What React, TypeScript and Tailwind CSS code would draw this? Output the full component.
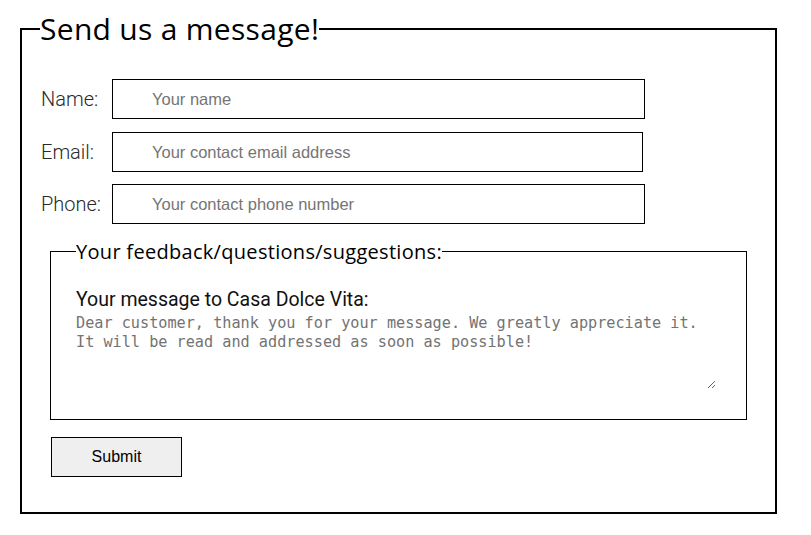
export default function App() {
  const rows = [
    { label: "Name:", placeholder: "Your name", w: "w-[533px]", mt: "mt-[32px]" },
    { label: "Email:", placeholder: "Your contact email address", w: "w-[531px]", mt: "mt-[13px]" },
    { label: "Phone:", placeholder: "Your contact phone number", w: "w-[533px]", mt: "mt-[12px]" },
  ];

  return (
    <div className="min-h-screen bg-white pl-[20px] pt-[11px]">
      <fieldset className="w-[757px] border-2 border-black pl-[18px] pb-[35px]">
        <legend className="font-['Open_Sans',sans-serif] text-[30px] leading-[36px] tracking-[0.3px] text-black">
          Send us a message!
        </legend>

        {rows.map((r) => (
          <div key={r.label} className={`flex items-center ${r.mt}`}>
            <label className="w-[72px] pl-[1px] font-['Roboto',sans-serif] text-[20px] font-light text-[#2a2a2a]">
              {r.label}
            </label>
            <input
              type="text"
              placeholder={r.placeholder}
              className={`${r.w} h-[40px] border border-black pl-[39px] font-['Liberation_Sans',sans-serif] text-[16.5px] outline-none placeholder:text-[#757575]`}
            />
          </div>
        ))}

        {/* Feedback box */}
        <fieldset className="mt-[16px] ml-[10px] w-[697px] border border-black pl-[25px] pb-[30px]">
          <legend className="font-['Open_Sans',sans-serif] text-[20px] leading-[23px] tracking-[0.3px] text-black">
            Your feedback/questions/suggestions:
          </legend>
          <label className="mt-[26px] block font-['Roboto',sans-serif] text-[19.5px] leading-[21px] text-[#111]">
            Your message to Casa Dolce Vita:
          </label>
          <textarea
            rows={4}
            placeholder={
              "Dear customer, thank you for your message. We greatly appreciate it.\nIt will be read and addressed as soon as possible!"
            }
            className="mt-[4px] block h-[75px] w-[640px] resize border-0 p-0 font-['DejaVu_Sans_Mono',monospace] text-[15.2px] leading-[19px] outline-none placeholder:text-[#737373]"
          />
        </fieldset>

        <button className="mt-[17px] ml-[11px] h-[40px] w-[131px] border border-black bg-[#efefef] font-['Liberation_Sans',sans-serif] text-[16px] text-black">
          Submit
        </button>
      </fieldset>
    </div>
  );
}
